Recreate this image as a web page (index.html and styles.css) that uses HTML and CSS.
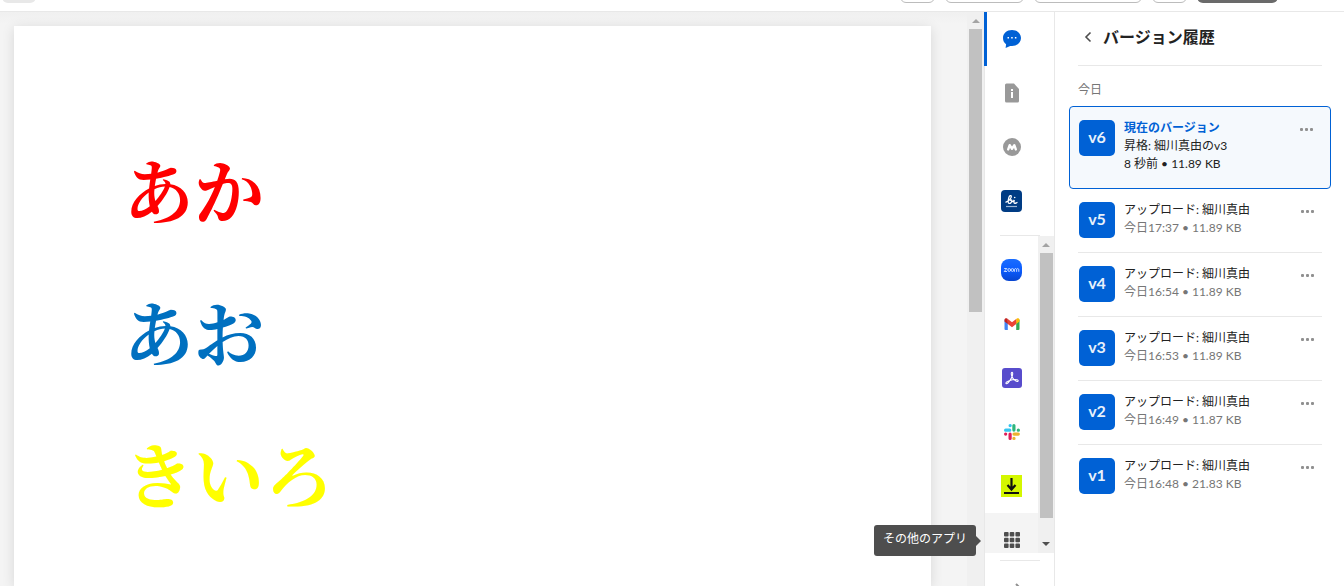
FILE: index.html
```html
<!DOCTYPE html>
<html lang="ja">
<head>
    <meta charset="UTF-8">
    <meta name="viewport" content="width=device-width, initial-scale=1.0">
    <title>バージョン履歴</title>
    <link rel="stylesheet" href="styles.css">
</head>
<body>
    <header class="toolbar">
        <span class="file-chip"></span>
        <button class="tool tool-small" aria-label="印刷"></button>
        <button class="tool tool-medium" aria-label="署名"></button>
        <button class="tool tool-large" aria-label="開く"></button>
        <button class="tool tool-small" aria-label="ダウンロード"></button>
        <button class="tool tool-share" aria-label="共有"></button>
    </header>

    <div class="workspace">
        <main class="viewer">
            <article class="paper">
                <p class="red">あか</p>
                <p class="blue">あお</p>
                <p class="yellow">きいろ</p>
            </article>
        </main>
        <div class="scrollbar viewer-scrollbar">
            <span class="arrow-up"></span>
            <span class="thumb"></span>
        </div>

        <nav class="rail">
            <button class="rail-item active" aria-label="アクティビティ">
                <svg width="20" height="20" viewBox="0 0 20 20"><path d="M10 1C4.800 1 1 4.500 1 9c0 2.800 1.200 4.900 3.100 6.300L3.600 19l4.600-2.100c.6.100 1.200.1 1.800.1 5.200 0 9-3.500 9-8s-3.800-8-9-8z" fill="#0061d5"/><path d="M5.500 8h1.500v1.500H5.500zM9.200 8h1.500v1.500H9.200zM12.900 8h1.500v1.500h-1.500z" fill="#fff"/></svg>
            </button>
            <button class="rail-item" aria-label="詳細">
                <svg width="20" height="20" viewBox="0 0 20 20"><path d="M4.500 0.500H12L17 6v12a1.500 1.500 0 0 1-1.500 1.500h-11A1.500 1.500 0 0 1 3 18V2A1.500 1.500 0 0 1 4.500 .5z" fill="#999"/><path d="M9 6h2v2H9zM9 9h2v6H9z" fill="#fff"/></svg>
            </button>
            <button class="rail-item" aria-label="メタデータ">
                <svg width="20" height="20" viewBox="0 0 20 20"><circle cx="10" cy="10" r="9" fill="#999"/><path d="M6.200 12.400l1.500-4.200 2.300 3.600 2.300-3.600 1.500 4.200" fill="none" stroke="#fff" stroke-width="2.400" stroke-linecap="round" stroke-linejoin="round"/></svg>
            </button>
            <button class="rail-item" aria-label="Box Sign">
                <svg width="22" height="22" viewBox="0 0 22 22"><rect width="21" height="22" rx="4" fill="#003c84"/><path d="M5 12.200C8 11 10.600 8 10.300 6.200 10 5 8.500 5.500 7.900 7.400c-.8 2.500-1.200 5.800.1 6 1.500.2 2.800-1.200 2.800-2.600 0-1.100-1-1.200-1.500-.4M10.800 11.400c1 .4 2-.4 2.500-1.400-.5 1.700-.6 3.300.4 3.400.8 0 1.300-.4 2.300-.9" fill="none" stroke="#fff" stroke-width="1.300" stroke-linecap="round"/><circle cx="13.700" cy="7.500" r=".8" fill="#fff"/><path d="M5 16.500h11" stroke="#9db7d8" stroke-width="1.200"/></svg>
            </button>

            <div class="divider"></div>
            <div class="apps">
                <div class="app-list">
                    <button class="rail-item" aria-label="Zoom">
                        <svg width="22" height="22" viewBox="0 0 22 22"><defs><linearGradient id="zoomBlue" x2="0" y2="1"><stop offset="0" stop-color="#1a6dff"/><stop offset=".5" stop-color="#0b5cff"/><stop offset="1" stop-color="#0845d0"/></linearGradient></defs><rect width="21" height="22" rx="8" fill="url(#zoomBlue)"/><g fill="none" stroke="#d8e6ff" stroke-width=".9" stroke-linejoin="round"><path d="M3.200 9.500h2.600l-2.600 3h2.800M13.400 12.800V10.300q1.100-1.600 2.200 0v2.500M15.600 10.300q1.100-1.600 2.200 0v2.500"/><circle cx="8.200" cy="11" r="1.400"/><circle cx="11.400" cy="11" r="1.400"/></g></svg>
                    </button>
                    <button class="rail-item" aria-label="Gmail">
                        <svg width="18" height="18" viewBox="0 0 18 18"><path d="M1.500 4.500l3.300 2.400V15H2.600a1.100 1.100 0 0 1-1.100-1.100z" fill="#4285f4"/><path d="M13.200 6.900l3.300-2.400v9.400a1.100 1.100 0 0 1-1.100 1.100h-2.200z" fill="#34a853"/><path d="M13.200 4l.7-.5c1.100-.8 2.600 0 2.600 1.300v1.800l-3.300 2.500z" fill="#fbbc04"/><path d="M4.800 4L9 7.200 13.200 4v5.100L9 12.200 4.800 9.100z" fill="#ea4335"/><path d="M1.500 4.800c0-1.300 1.500-2.100 2.600-1.300l.7.500v5.100L1.500 6.600z" fill="#c5221f"/></svg>
                    </button>
                    <button class="rail-item" aria-label="Adobe Acrobat">
                        <svg width="20" height="20" viewBox="0 0 20 20"><rect width="20" height="20" rx="3" fill="#584ccc"/><path d="M4 15.500c-.8-1.200 3-3.200 6.500-3.800 3.800-.6 6.300.2 5.500 1.400-.9 1.100-4.500-1-6-4.300-1-2.500-1-4.500 0-4.500s.9 2.600-.3 5.300C8.200 12.700 5 16.800 4 15.500z" fill="none" stroke="#fff" stroke-width="1.100"/></svg>
                    </button>
                    <button class="rail-item" aria-label="Slack">
                        <svg width="18" height="18" viewBox="0 0 18 18"><g stroke-width="3.200" stroke-linecap="round"><path d="M2.600 7.200h4.200M7.100 2.600h.1" stroke="#36c5f0"/><path d="M10.900 2.600v4.500M15.300 7.200h.1" stroke="#2eb67d"/><path d="M11 11.100h4.300M10.900 15.400h.1" stroke="#ecb22e"/><path d="M7.100 11.100v4.300M2.600 11.100h.1" stroke="#e01e5a"/></g></svg>
                    </button>
                    <button class="rail-item" aria-label="ダウンロード">
                        <svg width="22" height="22" viewBox="0 0 22 22"><rect width="21" height="22" fill="#d4f700"/><path d="M10.500 3v11M6.500 10l4 4.500 4-4.500M3 18h15" fill="none" stroke="#111" stroke-width="2.200"/></svg>
                    </button>
                    <button class="rail-item more" aria-label="その他のアプリ" aria-describedby="moreTip">
                        <svg width="16" height="16" viewBox="0 0 16 16" fill="#4e4e4e"><rect width="4.600" height="4.600" rx="1"/><rect x="5.700" width="4.600" height="4.600" rx="1"/><rect x="11.400" width="4.600" height="4.600" rx="1"/><rect y="5.700" width="4.600" height="4.600" rx="1"/><rect x="5.700" y="5.700" width="4.600" height="4.600" rx="1"/><rect x="11.400" y="5.700" width="4.600" height="4.600" rx="1"/><rect y="11.400" width="4.600" height="4.600" rx="1"/><rect x="5.700" y="11.400" width="4.600" height="4.600" rx="1"/><rect x="11.400" y="11.400" width="4.600" height="4.600" rx="1"/></svg>
                    </button>
                </div>
                <div class="scrollbar app-scrollbar">
                    <span class="arrow-up"></span>
                    <span class="thumb"></span>
                    <span class="arrow-down"></span>
                </div>
                <div class="tooltip" id="moreTip" role="tooltip">その他のアプリ</div>
            </div>
            <div class="divider"></div>
            <button class="collapse" aria-label="サイドバーを閉じる">
                <svg width="14" height="14" viewBox="0 0 14 14"><path d="M6 1l6 6-6 6M0 7h11" fill="none" stroke="#909090" stroke-width="2"/></svg>
            </button>
        </nav>

        <aside class="panel">
            <div class="panel-header">
                <button class="back" aria-label="戻る">
                    <svg width="8" height="12" viewBox="0 0 8 12"><path d="M6.500 1.500L2 6l4.500 4.500" fill="none" stroke="#4e4e4e" stroke-width="1.600"/></svg>
                </button>
                <h1>バージョン履歴</h1>
            </div>
            <h2>今日</h2>
            <ul class="versions">
                <li class="version current">
                    <span class="badge">v6</span>
                    <div class="info">
                        <a href="#" class="title">現在のバージョン</a>
                        <div>昇格: 細川真由のv3</div>
                        <div>8 秒前 • 11.89 KB</div>
                    </div>
                    <button class="dots" aria-label="v6の操作"><i></i><i></i><i></i></button>
                </li>
                <li class="version">
                    <span class="badge">v5</span>
                    <div class="info">
                        <div>アップロード: 細川真由</div>
                        <div class="meta">今日17:37 • 11.89 KB</div>
                    </div>
                    <button class="dots" aria-label="v5の操作"><i></i><i></i><i></i></button>
                </li>
                <li class="version">
                    <span class="badge">v4</span>
                    <div class="info">
                        <div>アップロード: 細川真由</div>
                        <div class="meta">今日16:54 • 11.89 KB</div>
                    </div>
                    <button class="dots" aria-label="v4の操作"><i></i><i></i><i></i></button>
                </li>
                <li class="version">
                    <span class="badge">v3</span>
                    <div class="info">
                        <div>アップロード: 細川真由</div>
                        <div class="meta">今日16:53 • 11.89 KB</div>
                    </div>
                    <button class="dots" aria-label="v3の操作"><i></i><i></i><i></i></button>
                </li>
                <li class="version">
                    <span class="badge">v2</span>
                    <div class="info">
                        <div>アップロード: 細川真由</div>
                        <div class="meta">今日16:49 • 11.87 KB</div>
                    </div>
                    <button class="dots" aria-label="v2の操作"><i></i><i></i><i></i></button>
                </li>
                <li class="version">
                    <span class="badge">v1</span>
                    <div class="info">
                        <div>アップロード: 細川真由</div>
                        <div class="meta">今日16:48 • 21.83 KB</div>
                    </div>
                    <button class="dots" aria-label="v1の操作"><i></i><i></i><i></i></button>
                </li>
            </ul>
        </aside>
    </div>
</body>
</html>
```
FILE: styles.css
```css
* { margin: 0; padding: 0; box-sizing: border-box; }
body { display: flex; flex-direction: column; height: 100vh; overflow: hidden; background: #fff; color: #222; font: 12px/18px Lato, "Noto Sans CJK JP", sans-serif; }
button { border: none; background: none; cursor: pointer; }
svg { display: block; }

/* top bar */
.toolbar { flex: none; display: flex; align-items: flex-end; gap: 10px; height: 12px; padding: 0 66px 8px 2px; border-bottom: 1px solid #e8e8e8; overflow: hidden; }
.file-chip { width: 34px; height: 24px; margin-right: auto; border-radius: 6px; background: #e8e8e8; }
.tool { height: 32px; border: 1px solid #bcbcbc; border-radius: 6px; background: #fff; }
.tool-small { width: 35px; }
.tool-medium { width: 79px; }
.tool-large { width: 108px; }
.tool-share { width: 81px; border: none; background: #6a6a6a; }

.workspace { flex: 1; display: flex; min-height: 0; }

/* document */
.viewer { flex: 1; display: flex; padding: 14px 36px 0 14px; background: linear-gradient(#f0f0f0, #f4f4f4 12px); overflow: hidden; }
.paper { flex: 1; padding: 92px 110px; background: #fff; box-shadow: 0 2px 12px rgba(0, 0, 0, 0.12); font: 700 70px/142px "Noto Serif CJK JP", "Noto Sans CJK JP", serif; }
.red { color: #ff0000; }
.blue { color: #0070c0; }
.yellow { color: #ffff00; }

/* scrollbars */
.scrollbar { flex: none; display: flex; flex-direction: column; align-items: center; width: 17px; background: #f0f0f0; }
.scrollbar .thumb { width: 13px; background: #c1c1c1; }
.arrow-up { margin: 7px 0 6px; border: 4px solid transparent; border-top: none; border-bottom-color: #a3a3a3; }
.arrow-down { margin: auto 0 7px; border: 4px solid transparent; border-bottom: none; border-top-color: #505050; }
.viewer-scrollbar .thumb { height: 283px; }
.app-scrollbar { width: 16px; }
.app-scrollbar .thumb { height: 265px; }

/* icon rail */
.rail { flex: none; display: flex; flex-direction: column; width: 71px; border: 1px solid #e8e8e8; border-width: 0 1px; }
.rail-item { flex: none; display: flex; align-items: center; justify-content: center; width: 53px; height: 54px; }
.rail-item.active { box-shadow: inset 2px 0 #0061d5, -1px 0 #0061d5; }
.divider { flex: none; width: 40px; height: 1px; margin: 7px 0 0 15px; background: #e8e8e8; }
.apps { flex: none; position: relative; display: flex; height: 317px; }
.app-list { flex: 1; padding-top: 7px; overflow: hidden; }
.more { background: #f4f4f4; }
.tooltip { position: absolute; right: 100%; bottom: -3px; margin-right: 9px; padding: 5px 9px 8px; border-radius: 3px; background: #4e4e4e; color: #fff; white-space: nowrap; }
.tooltip::after { content: ""; position: absolute; left: 100%; top: 50%; margin-top: -5px; border: 5px solid transparent; border-right: none; border-left-color: #4e4e4e; }
.collapse { align-self: flex-start; margin: 22px 0 0 25px; }

/* version history */
.panel { flex: none; width: 289px; padding: 0 13px 0 14px; }
.panel-header { display: flex; align-items: center; gap: 11px; height: 54px; margin: 0 9px; padding: 0 6px 4px; border-bottom: 1px solid #e8e8e8; }
h1 { font-size: 16px; line-height: 24px; font-weight: 700; }
h2 { margin: 15px 9px 7px; color: #767676; font-size: 12px; font-weight: 400; }
.versions { list-style: none; }
.version { display: flex; gap: 9px; height: 64px; margin: 0 9px; padding: 13px 0 0 1px; border-bottom: 1px solid #e8e8e8; }
.version:last-child { border-bottom: none; }
.version.current { height: 83px; margin: 0; padding: 13px 9px 0; border: 1px solid #0061d5; border-radius: 4px; background: #f5f9fd; }
.badge { flex: none; width: 36px; height: 36px; border-radius: 5px; background: #0061d5; color: #e8f1fb; font-size: 16px; font-weight: 700; line-height: 34px; text-align: center; }
.info { flex: 1; margin-top: -1px; }
.title { display: block; color: #0061d5; font-weight: 700; text-decoration: none; }
.meta { color: #767676; }
.dots { display: flex; align-items: center; align-self: flex-start; gap: 2px; height: 19px; margin-right: 8px; }
.dots i { width: 3px; height: 3px; border-radius: 1px; background: #909090; }
```
